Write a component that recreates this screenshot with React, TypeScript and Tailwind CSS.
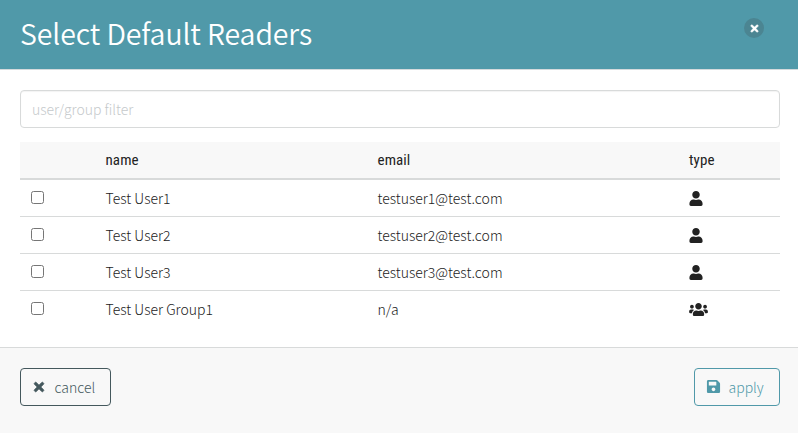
import { FaSave, FaTimes, FaUser, FaUsers } from 'react-icons/fa';

const rows = [
  { name: 'Test User1', email: 'testuser1@test.com', group: false },
  { name: 'Test User2', email: 'testuser2@test.com', group: false },
  { name: 'Test User3', email: 'testuser3@test.com', group: false },
  { name: 'Test User Group1', email: 'n/a', group: true },
];

const columns = 'grid grid-cols-[85.5px_272px_311.5px_1fr] items-center';

export default function App() {
  return (
    <div className="flex h-[433px] w-[798px] flex-col overflow-hidden bg-white font-['Noto_Sans_CJK_SC',sans-serif] text-[14px] font-light text-[#222]">
      <header className="flex h-[70px] shrink-0 items-start justify-between border-b border-[#d4dadc] bg-[#5099a9] pl-5 pr-[34px]">
        <h1 className="mt-[13px] whitespace-nowrap text-[28.5px] font-[350] leading-[40px] tracking-[-0.1px] text-white">Select Default Readers</h1>
        <button aria-label="Close" className="mt-[18px] flex size-5 items-center justify-center rounded-full bg-[#4b8592] text-white">
          <FaTimes size={11} stroke="currentColor" strokeWidth={20} />
        </button>
      </header>

      <main className="h-[277px] shrink-0 pl-5 pr-[18px] pt-5">
        <input
          type="text"
          placeholder="user/group filter"
          className="block h-[38px] w-full rounded-[4px] border border-[#d8dada] px-[11px] pb-px leading-5 shadow-[inset_0_1px_1px_rgba(0,0,0,0.05)] outline-none placeholder:text-[#c5c9cb]"
        />
        <div className="mt-[14px]">
          <div className={`${columns} h-[38px] border-b-2 border-[#d8dada] bg-[#f8f8f8] font-['Roboto_Condensed','Roboto',sans-serif] text-[15px] font-normal tracking-[0.1px] [font-stretch:75%]`}>
            <span />
            <span>name</span>
            <span>email</span>
            <span>type</span>
          </div>
          {rows.map((row) => (
            <div key={row.name} className={`${columns} h-[37px] border-b border-[#d8dada] last:border-transparent`}>
              <input type="checkbox" aria-label={row.name} className="mb-px ml-[11px] size-[13px]" />
              <span>{row.name}</span>
              <span>{row.email}</span>
              {row.group ? <FaUsers className="h-[15px] w-[19px]" /> : <FaUser className="h-[15px] w-[14px]" />}
            </div>
          ))}
        </div>
      </main>

      <footer className="flex grow items-start justify-between border-t border-[#d8dada] bg-[#f8f8f8] pl-5 pr-[18px] pt-5">
        <button className="flex h-[38px] w-[91px] items-center rounded-[4px] border border-[#44585d] pl-[11px] text-[#44585d]">
          <FaTimes size={14} className="-mt-px" stroke="currentColor" strokeWidth={28} />
          <span className="ml-[8.5px]">cancel</span>
        </button>
        <button className="flex h-[38px] w-[86px] items-center rounded-[4px] border border-[#5099a9] pl-[11px] text-[#5099a9]">
          <FaSave size={15} className="-mt-px" />
          <span className="ml-[7.5px]">apply</span>
        </button>
      </footer>
    </div>
  );
}
